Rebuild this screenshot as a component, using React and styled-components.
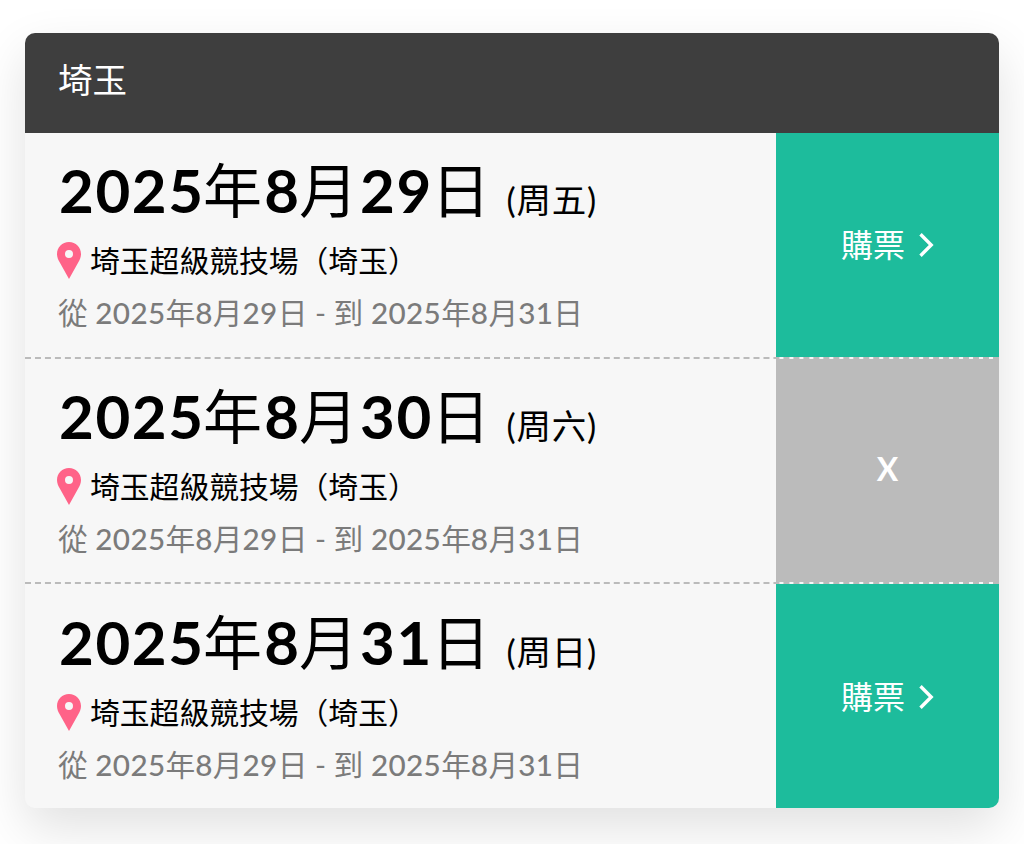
import React from 'react';
import styled, { createGlobalStyle } from 'styled-components';

const GlobalStyle = createGlobalStyle`
    * {
        box-sizing: border-box;
    }
    body {
        margin: 0;
        background: #fff;
        overflow: hidden;
        font-family: Lato, "Noto Sans CJK TC", sans-serif;
    }
`

const Page = styled.div`
    height: 844px;
    padding: 33px 25px 36px;
`
const Card = styled.section`
    width: 974px;
    height: 775px;
    display: flex;
    flex-direction: column;
    border-radius: 10px;
    overflow: hidden;
    background: #f7f7f7;
    box-shadow: 0 20px 50px rgba(0, 0, 0, 0.12);
`
const Header = styled.header`
    height: 100px;
    flex: none;
    padding: 22px 33px 0;
    background: #3e3e3e;
    color: #fff;
    font-size: 34.5px;
    line-height: 50px;
`
const Info = styled.div`
    flex: 1;
    padding: 17px 0 0 33px;
    white-space: nowrap;
`
const Row = styled.div`
    display: flex;
    flex: none;
    height: 226px;
    border-bottom: 2px dashed #bbb;
    &:nth-last-child(2){
        height: 225px;
    }
    &:last-child{
        height: 224px;
        border-bottom: 0;
    }
    &:last-child ${Info}{
        padding-top: 18px;
    }
`
const DateLine = styled.div`
    height: 80px;
    line-height: 80px;
    font-size: 59px;
    color: #000;
    b{
        margin: 0 -1.5px 0 2px;
        font-size: 60px;
        font-weight: 700;
        letter-spacing: 1.6px;
    }
    b:first-child{
        margin-left: 1px;
    }
    small{
        margin-left: 16px;
        font-size: 34.5px;
        letter-spacing: 0.8px;
    }
`
const Venue = styled.div`
    height: 52px;
    display: flex;
    align-items: center;
    gap: 9px;
    margin-top: 5px;
    line-height: 52px;
    font-size: 29.8px;
    color: #000;
    svg{
        margin: -1px 0 0 -1px;
    }
`
const Period = styled.div`
    height: 50px;
    margin-top: 1px;
    line-height: 50px;
    font-size: 29.7px;
    color: #7b7b7b;
    span{
        font-weight: 500;
        letter-spacing: 0.35px;
    }
`
const Action = styled.div`
    width: 223px;
    display: flex;
    align-items: center;
    justify-content: center;
    gap: 14px;
    padding-bottom: ${({ $soldOut }) => ($soldOut ? '5px' : '0')};
    background: ${({ $soldOut }) => ($soldOut ? '#bbb' : '#1dbc9c')};
    color: #fff;
    font-size: 32px;
    font-weight: ${({ $soldOut }) => ($soldOut ? 700 : 400)};
    cursor: ${({ $soldOut }) => ($soldOut ? 'default' : 'pointer')};
    ${Row}:last-child &{
        padding-top: 2px;
    }
`
const Label = styled.span`
    padding-bottom: 4px;
`

const shows = [
  { day: '29', weekday: '周五', soldOut: false },
  { day: '30', weekday: '周六', soldOut: true },
  { day: '31', weekday: '周日', soldOut: false },
]

const Pin = () => (
  <svg width="24" height="37" viewBox="0 0 24 37">
    <path
      fill="#ff6388"
      fillRule="evenodd"
      d="M12 0C5.2 0 0 5.2 0 12c0 3.2 1.2 5.7 2.8 8.6L12 37l9.2-16.4C22.8 17.7 24 15.2 24 12 24 5.2 18.8 0 12 0zm0 8a4 4 0 1 1 0 8 4 4 0 0 1 0-8z"
    />
  </svg>
)

const Chevron = () => (
  <svg width="15" height="24" viewBox="0 0 15 24">
    <path d="M1.5 1.3 12.2 12 1.5 22.7" fill="none" stroke="#fff" strokeWidth="3.4" />
  </svg>
)

const Show = ({ day, weekday, soldOut }) => (
  <Row>
    <Info>
      <DateLine>
        <b>2025</b>年<b>8</b>月<b>{day}</b>日<small>({weekday})</small>
      </DateLine>
      <Venue><Pin />埼玉超級競技場（埼玉）</Venue>
      <Period>
        從 <span>2025</span>年<span>8</span>月<span>29</span>日 - 到 <span>2025</span>年<span>8</span>月<span>31</span>日
      </Period>
    </Info>
    <Action $soldOut={soldOut}>
      {soldOut ? 'X' : <><Label>購票</Label><Chevron /></>}
    </Action>
  </Row>
)

export default function App() {
  return (
    <Page>
      <GlobalStyle />
      <Card>
        <Header>埼玉</Header>
        {shows.map((show) => (
          <Show key={show.day} {...show} />
        ))}
      </Card>
    </Page>
  )
}
